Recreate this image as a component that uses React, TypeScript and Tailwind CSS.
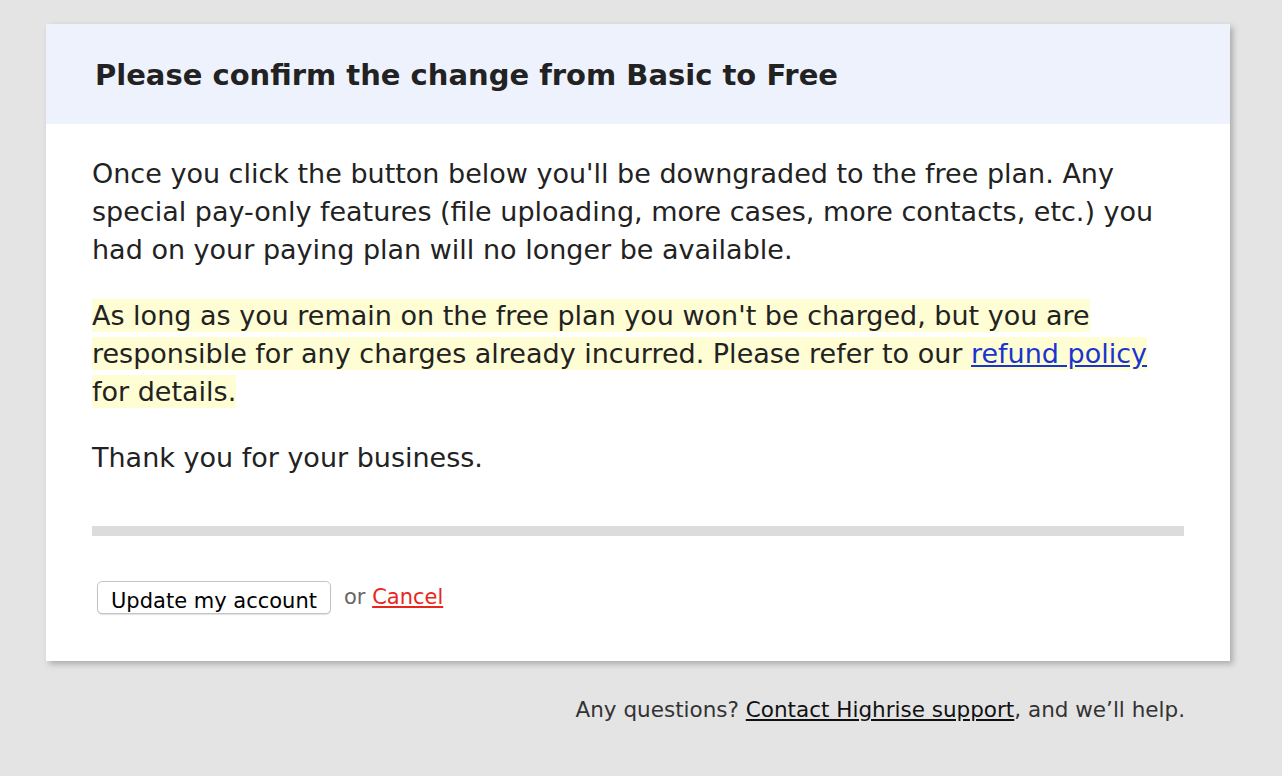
import React from 'react'

const font = { fontFamily: '"DejaVu Sans", "Noto Sans", sans-serif' }

const App = () => {
  return (
    <div className="min-h-screen w-full bg-[#e4e4e4] pt-[24px] pb-10" style={font}>
      <div className="ml-[46px] w-[1184px] bg-white shadow-[3px_3px_6px_rgba(0,0,0,0.25)]">
        <div className="flex h-[100px] items-center bg-[#eef2fd] px-[49px]">
          <h1 className="pt-[3px] text-[29px] font-bold text-[#222]">Please confirm the change from Basic to Free</h1>
        </div>
        <div className="px-[46px] pt-[31px] pb-[45px] text-[27px] leading-[38px] text-[#222]">
          <p>
            Once you click the button below you'll be downgraded to the free plan. Any special{' '}
            <span className="whitespace-nowrap">pay-only</span> features (file uploading, more cases, more
            contacts, etc.) you had on your paying plan will no longer be available.
          </p>
          <p className="mt-[28px]">
            <span className="bg-[#fefdd3] py-[1px] box-decoration-clone">
              As long as you remain on the free plan you won't be charged, but you are responsible for any
              charges already incurred. Please refer to our{' '}
              <a href="#" className="text-[#1a34d0] underline">refund policy</a> for details.
            </span>
          </p>
          <p className="mt-[28px]">Thank you for your business.</p>
          <div className="mt-[49px] h-[10px] bg-[#dcdcdc]" />
          <div className="mt-[42px] flex items-center gap-[13px] pl-[5px]">
            <button className="h-[33px] rounded-[5px] border border-[#c4c4c4] bg-white px-[13px] text-[21px] text-black shadow-[0_1px_1px_rgba(0,0,0,0.12)]">
              Update my account
            </button>
            <span className="text-[21px] text-[#666]">
              or <a href="#" className="text-[#e8261c] underline">Cancel</a>
            </span>
          </div>
        </div>
      </div>
      <div className="mt-[33px] w-[1185px] text-right text-[21.5px] text-[#333]">
        Any questions? <a href="#" className="text-[#111] underline">Contact Highrise support</a>, and we’ll help.
      </div>
    </div>
  )
}

export default App
